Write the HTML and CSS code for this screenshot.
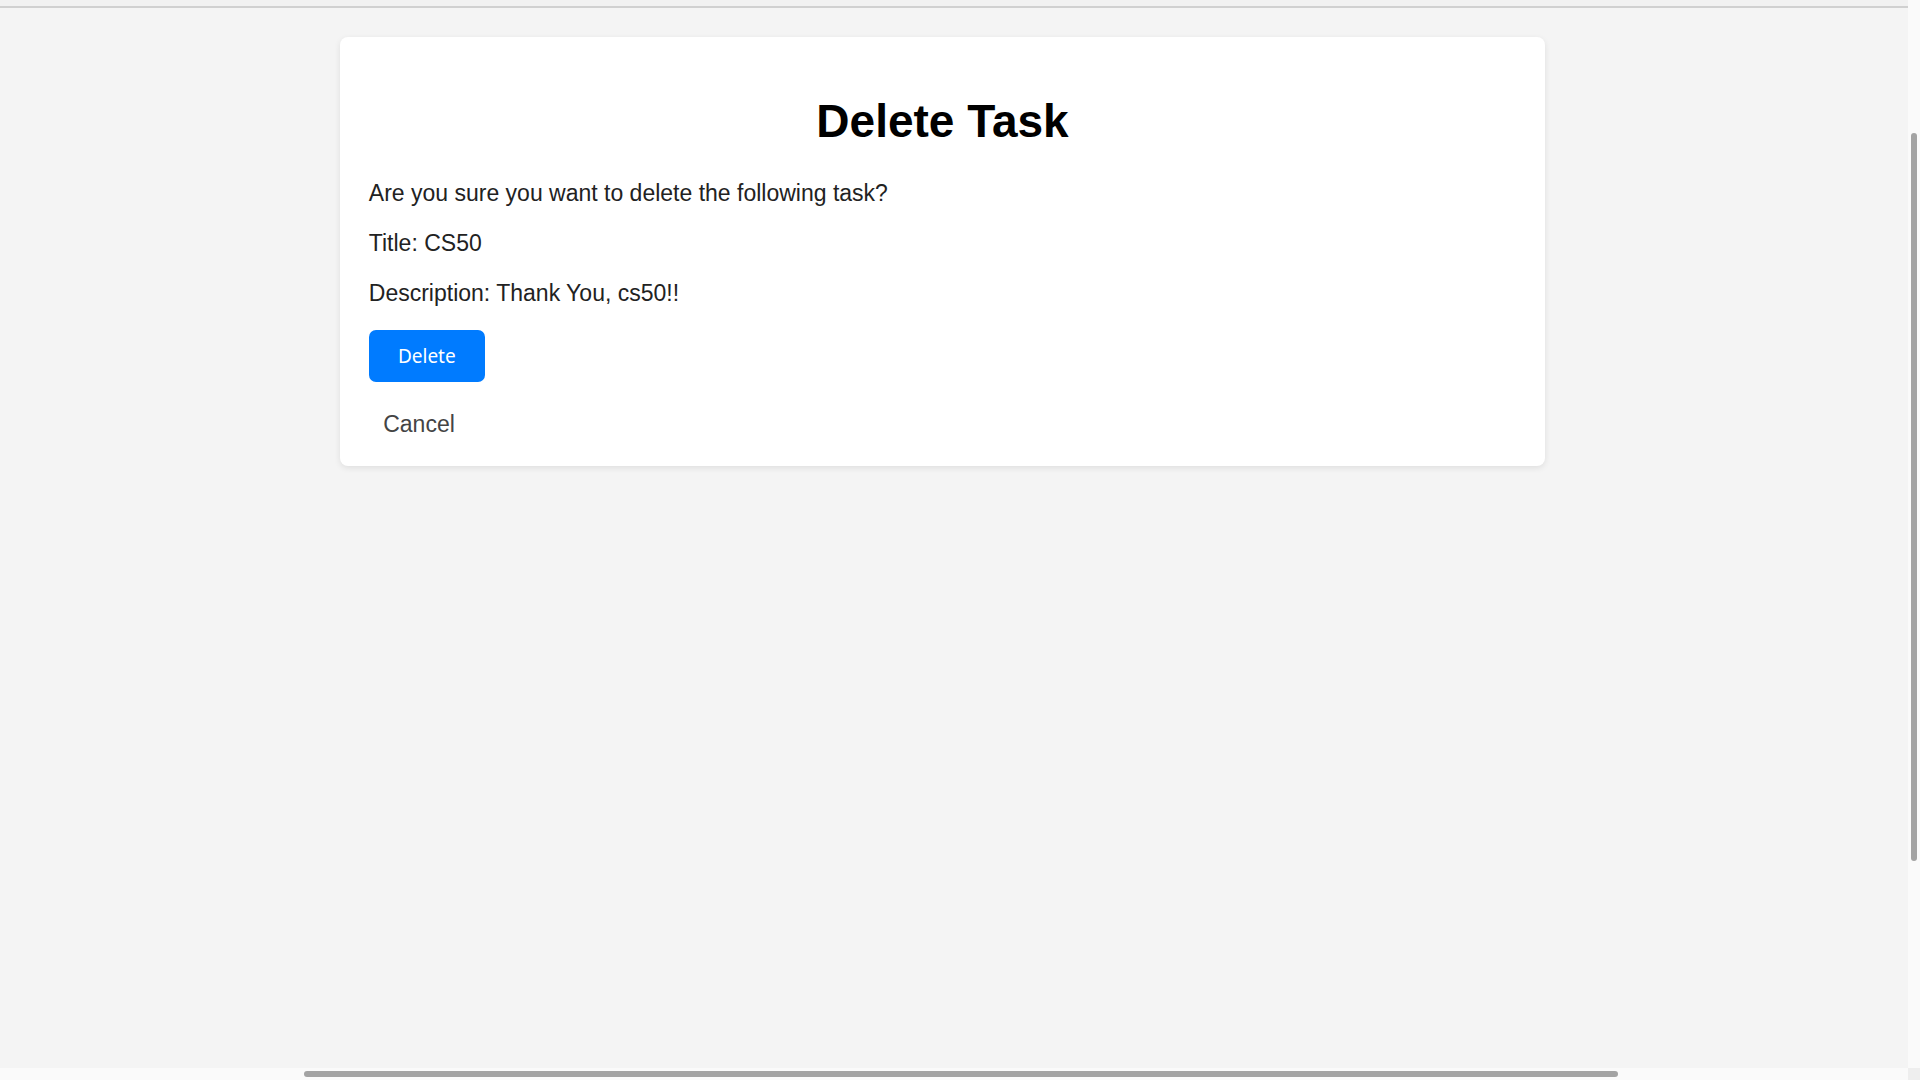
FILE: index.html
```html
<!DOCTYPE html>
<html lang="en">
<head>
<meta charset="utf-8">
<title>Delete Task</title>
<link rel="stylesheet" href="styles.css">
</head>
<body>
<div class="frame">
  <div class="main">
    <div class="topstrip"></div>
    <div class="card">
      <h1 class="card-title">Delete Task</h1>
      <p class="card-text">Are you sure you want to delete the following task?</p>
      <p class="card-text">Title: CS50</p>
      <p class="card-text">Description: Thank You, cs50!!</p>
      <form class="delete-form">
        <button type="button" class="btn-delete">Delete</button>
      </form>
      <a class="cancel-link" href="#">Cancel</a>
    </div>
  </div>
  <div class="vscroll"><div class="vthumb"></div></div>
  <div class="hscroll"><div class="hthumb"></div></div>
  <div class="corner"></div>
</div>
</body>
</html>
```
FILE: styles.css
```css
html, body {
  margin: 0;
  padding: 0;
  height: 100%;
  overflow: hidden;
}
body {
  background: #f4f4f4;
  font-family: "Liberation Sans", Arial, sans-serif;
  color: #222;
}
.frame {
  display: grid;
  grid-template-columns: 1fr 12px;
  grid-template-rows: 1fr 12px;
  height: 100vh;
  width: 100vw;
}
.main {
  overflow: hidden;
  display: flex;
  flex-direction: column;
}
.topstrip {
  height: 6px;
  background: #f1f1f1;
  border-bottom: 2px solid #d0d0d0;
  flex: none;
}
.card {
  margin: 29px 0 0 340px;
  width: 1205px;
  box-sizing: border-box;
  padding: 28.8px;
  background: #fff;
  border-radius: 8px;
  box-shadow: 0 2px 6px rgba(0, 0, 0, 0.09);
  flex: none;
}
.card-title {
  font-size: 46px;
  font-weight: 700;
  color: #000;
  text-align: center;
  margin: 28.3px 0 32px;
}
.card-text {
  font-size: 23px;
  margin: 23px 0;
}
.delete-form {
  margin: 0;
}
.btn-delete {
  display: block;
  width: 116px;
  height: 52px;
  padding: 0;
  border: none;
  border-radius: 7px;
  background: #007bff;
  color: #fff;
  font-family: "Noto Sans", "Open Sans", sans-serif;
  font-size: 19px;
  line-height: 52px;
  cursor: pointer;
}
.cancel-link {
  display: inline-block;
  margin-top: 28.6px;
  padding-left: 14.4px;
  font-size: 23px;
  color: #444;
  text-decoration: none;
}
.vscroll {
  background: #fafafa;
}
.vthumb {
  margin: 133px 0 0 3px;
  width: 6px;
  height: 728px;
  border-radius: 3px;
  background: #a3a3a3;
}
.hscroll {
  background: #fafafa;
}
.hthumb {
  margin: 3px 0 0 304px;
  width: 1314px;
  height: 6px;
  border-radius: 3px;
  background: #a3a3a3;
}
.corner {
  background: #eeeeee;
}
```
